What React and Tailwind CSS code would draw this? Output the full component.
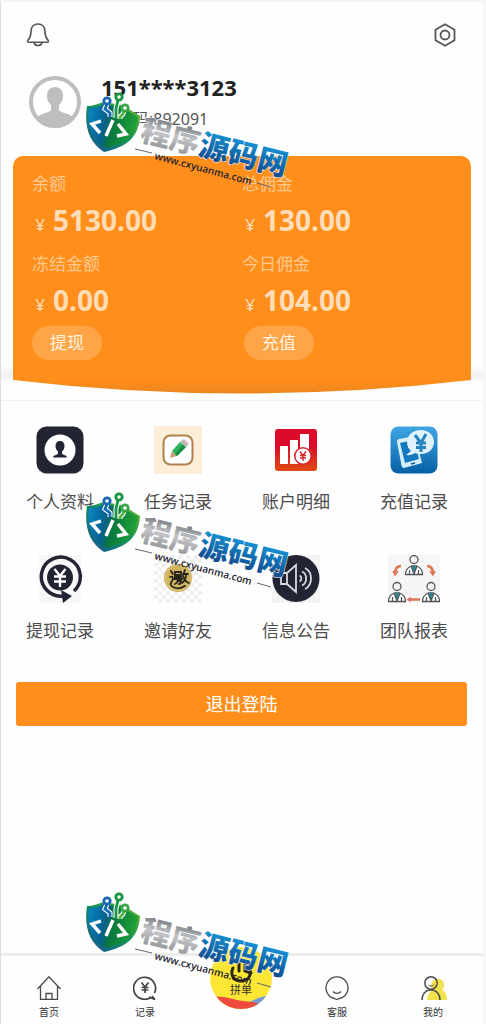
import { useId } from "react";

const balances = [
  { label: "余额", value: "5130.00" },
  { label: "总佣金", value: "130.00" },
  { label: "冻结金额", value: "0.00" },
  { label: "今日佣金", value: "104.00" },
];

function BellIcon() {
  return (
    <svg className="w-6 h-6" viewBox="0 0 24 24" fill="none" stroke="#55555a" strokeWidth="1.6" strokeLinejoin="round">
      <path d="M12 1C7.600 1 5 4.200 5 8.400c0 5-1.200 6.700-2.900 8.600-1.100 1.300-.6 2.300.9 2.300h18c1.500 0 2-1 .9-2.300C20.200 15.100 19 13.400 19 8.400 19 4.200 16.400 1 12 1z" />
      <path d="M8 19.500c.3 1.800 1.900 3 4 3s3.700-1.200 4-3" />
    </svg>
  );
}

function SettingsIcon() {
  return (
    <svg className="w-6 h-6" viewBox="0 0 24 24" fill="none" stroke="#55555a" strokeWidth="1.8">
      <path d="M12 1.300L21.500 6.700v10.600L12 22.700 2.500 17.300V6.700z" />
      <circle cx="12" cy="12" r="4.500" />
    </svg>
  );
}

function Avatar() {
  return (
    <svg className="w-13 h-13" viewBox="0 0 52 52">
      <circle cx="26" cy="26" r="24" fill="#fff" stroke="#bebebe" strokeWidth="4" />
      <path
        d="M26 11c-5 0-8 3.500-8 9 0 4 1.500 7 4 9v5c-1 3-11 3-14 8 5 5 11 8 18 8s13-3 18-8c-3-5-13-5-14-8v-5c2.500-2 4-5 4-9 0-5.500-3-9-8-9z"
        fill="#bebebe"
      />
    </svg>
  );
}

function ProfileIcon() {
  return (
    <svg className="w-12 h-12" viewBox="0 0 48 48">
      <rect x="0.500" y="0.500" width="47" height="47" rx="10" fill="#232433" />
      <circle cx="24" cy="24" r="15.500" fill="#fff" />
      <path
        d="M24 15c-3 0-4.500 2-4.500 5 0 2.500 1 4.300 2.500 5.500v2c-.5 1.500-5 1.500-5 4h14c0-2.500-4.500-2.500-5-4v-2c1.500-1.200 2.500-3 2.500-5.500 0-3-1.500-5-4.500-5z"
        fill="#232433"
      />
    </svg>
  );
}

function TaskIcon() {
  return (
    <svg className="w-12 h-12" viewBox="0 0 48 48">
      <rect width="48" height="48" fill="#feeed8" />
      <rect x="9.500" y="9.500" width="29" height="29" rx="7" fill="#fff" stroke="#b1814d" strokeWidth="2" />
      <path d="M16 32l2-7 5 5z" fill="#c7a074" />
      <path d="M18 25l8-9 6 5-9 9z" fill="#2fb45d" />
      <path d="M21 28l8-9 3 2-9 9z" fill="#168f44" />
      <path d="M26 16l2-2 6 5-2 2z" fill="#aebbb2" />
      <path d="M28 14l2-1 4.500 4-.5 2z" fill="#d8b3a8" />
    </svg>
  );
}

function AccountIcon({ id }) {
  return (
    <svg className="w-12 h-12" viewBox="0 0 48 48">
      <defs>
        <linearGradient id={id} x1="0" y1="0" x2="0" y2="1">
          <stop offset="0.400" stopColor="#dc0b2b" />
          <stop offset="1" stopColor="#df4b13" />
        </linearGradient>
      </defs>
      <rect x="3" y="3" width="42" height="42" rx="3" fill={`url(#${id})`} />
      <path d="M8 20h8v18H8zM18 14h8v24h-8zM28 8h9v18h-9z" fill="#fff" />
      <circle cx="31" cy="30" r="9" fill="#d9222a" />
      <circle cx="31" cy="30" r="7.500" fill="#fff" />
      <path d="M28 25.500l3 4 3-4M31 29.500V35M28 29.500h6M28 32h6" stroke="#d9222a" strokeWidth="1.400" fill="none" />
    </svg>
  );
}

function RechargeIcon({ id }) {
  return (
    <svg className="w-12 h-12" viewBox="0 0 48 48">
      <defs>
        <linearGradient id={id} x1="0" y1="0" x2="0" y2="1">
          <stop offset="0" stopColor="#3fa6e3" />
          <stop offset="1" stopColor="#0560a4" />
        </linearGradient>
      </defs>
      <rect x="0.500" y="0.500" width="47" height="47" rx="8" fill={`url(#${id})`} />
      <path d="M9 13l16-3 7 27-18 5c-1.500 0-2-1-2.500-2.500L7 16c-.2-1.600.5-2.500 2-3z" fill="#d5edfb" />
      <path d="M10 17l14-3 5 19-14 4z" fill="#1378bd" />
      <path d="M21 38l4-1" stroke="#0560a4" strokeWidth="1.500" />
      <path
        d="M31 4c-8 0-14 5-14 12 0 4 1.500 7 4 9l-5 4c4 .5 7-.5 9-2 2 .8 4 1 6 1 7.500 0 13-5 13-12S38.500 4 31 4z"
        fill="#dff2fd"
      />
      <path d="M25 9l6 8 5-9M31 17v9M26 17h10M26 21.500h10" stroke="#2583c2" strokeWidth="3" fill="none" />
    </svg>
  );
}

function WithdrawIcon() {
  return (
    <svg className="w-12 h-12" viewBox="0 0 48 48">
      <rect x="3" y="0" width="42" height="48" fill="#f7f7f7" />
      <path d="M38 36A19.500 19.500 0 1 0 27 41" fill="none" stroke="#232433" strokeWidth="3.500" />
      <path d="M25 35l11 6-9 7z" fill="#232433" />
      <circle cx="24" cy="22.500" r="13" fill="#232433" />
      <path d="M18.500 14l5.500 7 5.500-7M24 21v11M18 21.500h12M18 26.500h12" stroke="#fff" strokeWidth="2.400" fill="none" />
    </svg>
  );
}

function InviteIcon({ id }) {
  return (
    <svg className="w-12 h-12" viewBox="0 0 48 48">
      <defs>
        <pattern id={id} width="8" height="8" patternUnits="userSpaceOnUse">
          <rect width="8" height="8" fill="#fff" />
          <path d="M0 0h4v4H0zM4 4h4v4H4z" fill="#f0f0f0" />
        </pattern>
      </defs>
      <rect width="48" height="48" fill={`url(#${id})`} />
      <circle cx="24" cy="23" r="14" fill="#cfb35f" />
      <circle cx="24" cy="23" r="12.500" fill="none" stroke="#dcc67d" strokeWidth="1" />
      <g fill="none" stroke="#29251a" strokeWidth="1.800" strokeLinecap="round">
        <path d="M17 16l2 3M16 22c3-1 4 1 2 4s-2 4 1 6c4 2 9 1 12-1" />
        <path d="M21 17h6v5h-6zM21 20h6M20 24h8M24 24c0 3-1 4-3 5M24 26h3c0 2-1 3-2 3" />
        <path d="M31 15l-2 5M29 19h5M32 19c0 4-1 7-4 9M29 21c1 4 3 6 6 7" />
      </g>
    </svg>
  );
}

function NoticeIcon() {
  return (
    <svg className="w-12 h-12" viewBox="0 0 48 48" fill="none" stroke="#d9d9e0" strokeWidth="1.800">
      <rect width="48" height="48" fill="#f4f4f4" stroke="none" />
      <circle cx="24" cy="23.500" r="23.500" fill="#232433" stroke="none" />
      <path d="M15 18H9v11h6M15 18l9-8v27l-9-8z" />
      <path d="M27.500 20.500c2.500 1 2.500 5 0 6M30 16.500c5.500 2.500 5.500 11.500 0 14M33 13c8 4 8 17 0 21" />
    </svg>
  );
}

function Person({ x, y }) {
  return (
    <g transform={`translate(${x} ${y})`}>
      <circle cx="9" cy="4.500" r="4" fill="#f4f4f4" />
      <path d="M.5 19.500c0-5 2-7 6-8.500h5c4 1.500 6 3.500 6 8.500z" fill="#fff" />
      <path d="M9 11l-1.500 2L9 18l1.500-5z" fill="#278994" stroke="#278994" />
      <path d="M6 11l3 8 3-8M4.500 15v4.500M13.500 15v4.500" />
    </g>
  );
}

function TeamIcon() {
  return (
    <svg className="w-13 h-12" viewBox="0 0 52 48" fill="none" stroke="#53565a" strokeWidth="1.300">
      <rect width="52" height="48" fill="#f5f5f5" stroke="none" />
      <Person x={17} y={0} />
      <Person x={0} y={27} />
      <Person x={34} y={27} />
      <g stroke="#df7658" strokeWidth="2.500">
        <path d="M13 11c-4 0-6 2-6 8M39 11c4 0 6 2 6 8M32 44.500H20" />
        <path d="M5 16l2 4 3-4M42 16l3 4 2-4M23 42.500l-3 2 3 2" strokeWidth="1.500" />
      </g>
    </svg>
  );
}

function HomeIcon() {
  return (
    <svg className="w-6 h-6" viewBox="0 0 24 24" fill="none" stroke="#4a4a4a" strokeWidth="1.300">
      <path d="M.5 13L12 .8 23.500 13M3.500 10.500v13h17v-13M9 23.500v-6h6v6" />
    </svg>
  );
}

function RecordIcon() {
  return (
    <svg className="w-6 h-6" viewBox="0 0 24 24" fill="none" stroke="#444" strokeWidth="1.700">
      <path d="M18 21.200A11 11 0 1 1 21.500 17M16 21l6 2.500-3-3.500" />
      <path d="M8.500 6.500L12 11l3.500-4.500M12 11v6M8.500 11.500h7M8.500 14h7" />
    </svg>
  );
}

function ServiceIcon() {
  return (
    <svg className="w-6 h-6" viewBox="0 0 24 24" fill="none" stroke="#4a4a4a" strokeWidth="1.300" strokeLinejoin="round">
      <path d="M9.500 22.500a11 11 0 1 1 5 0L11.500 23.500z" />
      <path d="M8 15.500c2 2.400 6 2.400 8 0" />
    </svg>
  );
}

function MineIcon() {
  return (
    <svg className="w-7 h-6" viewBox="0 0 28 24" fill="none" stroke="#4a4a4a" strokeWidth="1.500">
      <path d="M19 3c4 0 6 2.500 6 6 0 2.500-1 4-2 5 3 1 5 5 5 10H8c1-6 3-9 6-10-4-5-1-11 5-11z" fill="#f2e34d" stroke="none" />
      <circle cx="12" cy="7" r="6.200" />
      <path d="M3 24c0-6 3.500-10 9-10s9 4 9 10" />
      <path d="M9.500 9c1.500 1.500 3.500 1.500 5 0" strokeWidth="1" />
    </svg>
  );
}

function GroupBuyIcon({ id }) {
  return (
    <svg className="w-16 h-16" viewBox="0 0 64 64">
      <defs>
        <clipPath id={id}>
          <circle cx="32" cy="32" r="31" />
        </clipPath>
      </defs>
      <g clipPath={`url(#${id})`}>
        <rect width="64" height="64" fill="#fee635" />
        <path d="M40 56c8-3 14-7 24-6v14H40z" fill="#759bd5" />
        <path d="M0 51c13-2 23 2 34 4 7 1 11 0 17 4v5H0z" fill="#ee4b3d" />
      </g>
      <path d="M24 22c-3 6 0 13 8 13 9 0 12-9 7-15M30 15v10M36 16v9l6 2" fill="none" stroke="#292718" strokeWidth="3" strokeLinecap="round" />
    </svg>
  );
}

// Site stamp laid over the page
function Watermark() {
  const id = useId();
  return (
    <svg className="w-56 h-28" viewBox="0 0 224 112">
      <defs>
        <linearGradient id={`${id}s`} x1="0" y1="0" x2="1" y2="0.200">
          <stop offset="0" stopColor="#0b86cc" />
          <stop offset="0.400" stopColor="#07618a" />
          <stop offset="0.550" stopColor="#08783f" />
          <stop offset="1" stopColor="#1f9f37" />
        </linearGradient>
        <linearGradient id={`${id}e`} x1="0" y1="1" x2="1" y2="0">
          <stop offset="0" stopColor="#174fa3" />
          <stop offset="0.500" stopColor="#128f5a" />
          <stop offset="1" stopColor="#76bd2b" />
        </linearGradient>
        <linearGradient id={`${id}g`} x1="0" y1="0" x2="0" y2="1">
          <stop offset="0.200" stopColor="#777b80" />
          <stop offset="0.500" stopColor="#c4c6c9" />
          <stop offset="1" stopColor="#85888c" />
        </linearGradient>
        <linearGradient id={`${id}b`} x1="0" y1="0" x2="0" y2="1">
          <stop offset="0.200" stopColor="#1593d4" />
          <stop offset="1" stopColor="#103c80" />
        </linearGradient>
      </defs>
      <path d="M2 14c6 0 11-2 16-4l19 3 18 11c-1 20-12 31-36 36C4 50-1 35 2 14z" fill={`url(#${id}e)`} />
      <path d="M4 16c6 0 10-1 14-4l18 3 17 10c-2 17-12 27-33 31C7 48 2 34 4 16z" fill={`url(#${id}s)`} />
      <g fill="none" stroke="#fff" strokeWidth="5">
        <path d="M22 12l-2 5 5 4v4M33 8l-2 9v9M39 19l-1 3-3 3v2" />
      </g>
      <g fill="none" strokeWidth="2.800">
        <path d="M22 12l-2 5 5 4v4" stroke="#1769b6" />
        <path d="M33 8l-2 9v9" stroke="#179444" />
        <path d="M39 19l-1 3-3 3v2" stroke="#51b448" />
        <circle cx="22" cy="9" r="3.200" fill="#fff" stroke="#1769b6" />
        <circle cx="34" cy="5" r="3.200" fill="#fff" stroke="#179444" />
        <circle cx="40" cy="16" r="3.200" fill="#fff" stroke="#38a548" />
      </g>
      <path d="M16 29l-9 3 8 9M28 28l-7 16M33 32l8 10-9 2" fill="none" stroke="#fff" strokeWidth="3.400" />
      <g
        transform="rotate(14 54 48)"
        className="font-['Noto_Sans_CJK_SC',sans-serif] font-black text-[30px]"
        stroke="#fff"
        strokeWidth="1"
        paintOrder="stroke"
      >
        <text x="54" y="48" fill={`url(#${id}g)`}>
          程序
        </text>
        <text x="114" y="48" fill={`url(#${id}b)`}>
          源码网
        </text>
      </g>
      <text
        x="69"
        y="67"
        transform="rotate(15 69 67)"
        fill="#22252b"
        className="font-['Open_Sans',sans-serif] font-semibold text-[10px]"
      >
        www.cxyuanma.com
      </text>
      <path d="M50 57l17 4M172 91l14 4" stroke="#666" strokeWidth="1" />
    </svg>
  );
}

const menu = [
  { label: "个人资料", icon: <ProfileIcon /> },
  { label: "任务记录", icon: <TaskIcon /> },
  { label: "账户明细", icon: <AccountIcon id="account" /> },
  { label: "充值记录", icon: <RechargeIcon id="recharge" /> },
  { label: "提现记录", icon: <WithdrawIcon /> },
  { label: "邀请好友", icon: <InviteIcon id="invite" /> },
  { label: "信息公告", icon: <NoticeIcon /> },
  { label: "团队报表", icon: <TeamIcon /> },
];

function NavItem({ label, icon }) {
  return (
    <a href="#" className="flex flex-col items-center pt-5 gap-1">
      {icon}
      <span className="text-[10px] leading-4 text-[#333]">{label}</span>
    </a>
  );
}

export default function App() {
  return (
    <div className="relative min-h-screen flex flex-col overflow-hidden bg-[#fefefe] border-t-2 border-t-[#f5f5f5] border-l border-l-[#dedede] border-r-3 border-r-[#f6f8f8] font-['Noto_Sans','Noto_Sans_CJK_SC',sans-serif] text-[#444]">
      <header className="flex items-center justify-between px-6 pt-[21px]">
        <button type="button" aria-label="通知" className="px-px">
          <BellIcon />
        </button>
        <button type="button" aria-label="设置" className="px-0.5">
          <SettingsIcon />
        </button>
      </header>

      <section className="flex items-start gap-5 pl-7 pt-6">
        <div className="pt-[5px]">
          <Avatar />
        </div>
        <div>
          <h1 className="text-[22px] leading-8 font-bold text-[#222]">151****3123</h1>
          <p className="text-[16px] leading-8 text-[#555]">邀请码:892091</p>
        </div>
      </section>

      <section className="mt-[21px] border-b border-[#f2f2f2] pb-1.5 bg-[linear-gradient(to_bottom,transparent_208px,#f1f1f3_220px,#fefefe_226px)]">
        <div className="mx-3">
          <div className="grid grid-cols-[210px_1fr] rounded-t-[10px] bg-[#ff8e1b] pl-[19px] pt-3 pb-5">
            {balances.map((item) => (
              <div key={item.label} className="h-20">
                <h2 className="text-[17px] leading-8 text-[#ffc98f]">{item.label}</h2>
                <p className="flex items-baseline gap-[5px] text-[#ffddb9]">
                  <span className="w-4 text-center text-[17px]">¥</span>
                  <span className="text-[28px] leading-10 font-bold">{item.value}</span>
                </p>
              </div>
            ))}
            <div className="-mt-0.5">
              <button type="button" className="w-[70px] h-[34px] rounded-full bg-[#ffa548] text-[17px] text-[#fff3df]">
                提现
              </button>
            </div>
            <div className="-mt-0.5 pl-0.5">
              <button type="button" className="w-[70px] h-[34px] rounded-full bg-[#ffa548] text-[17px] text-[#fff3df]">
                充值
              </button>
            </div>
          </div>
          <svg className="block w-full h-3.5" viewBox="0 0 458 14" preserveAspectRatio="none">
            <defs>
              <linearGradient id="cardEdge" x1="0" y1="0" x2="0" y2="1">
                <stop offset="0" stopColor="#ff8e1b" />
                <stop offset="1" stopColor="#ec851d" />
              </linearGradient>
            </defs>
            <path d="M0 0h458Q229 27 0 0z" fill="url(#cardEdge)" />
          </svg>
        </div>
      </section>

      <nav className="mt-[25px] mr-2.5 grid grid-cols-4 gap-y-[35px]">
        {menu.map((item) => (
          <a key={item.label} href="#" className="flex flex-col items-center">
            {item.icon}
            <span className="mt-2.5 h-9 text-[17px] leading-9 text-[#4d4d4d]">{item.label}</span>
          </a>
        ))}
      </nav>

      <button type="button" className="mt-[33px] ml-[15px] mr-4 h-11 rounded-[3px] bg-[#ff8e1b] text-[18px] text-white">
        退出登陆
      </button>

      <nav className="mt-auto h-[71px] pr-0.5 grid grid-cols-5 border-t-3 border-[#ececec]">
        <NavItem label="首页" icon={<HomeIcon />} />
        <NavItem label="记录" icon={<RecordIcon />} />
        <a href="#" className="relative flex justify-center">
          <span className="absolute -top-3.5 rounded-full bg-white p-1">
            <GroupBuyIcon id="group" />
            <span className="absolute inset-x-0 top-10 text-center text-[11px] leading-4 text-[#333]">拼单</span>
          </span>
        </a>
        <NavItem label="客服" icon={<ServiceIcon />} />
        <NavItem label="我的" icon={<MineIcon />} />
      </nav>

      <div className="pointer-events-none absolute left-[84px] top-[90px] flex flex-col gap-72">
        <Watermark />
        <Watermark />
        <Watermark />
      </div>
    </div>
  );
}
